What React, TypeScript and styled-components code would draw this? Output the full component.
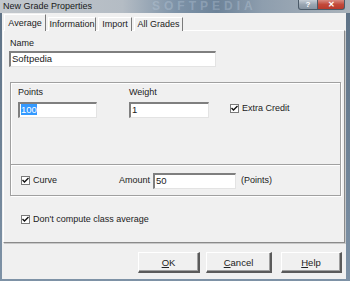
import React from "react";
import styled, { createGlobalStyle } from "styled-components";

const GlobalStyle = createGlobalStyle`
  html, body { margin: 0; padding: 0; background: #56697c; }
  body { font-family: "Liberation Sans", Arial, sans-serif; font-size: 9px; color: #222; }
  * { box-sizing: border-box; }
`;

const Window = styled.div`
  width: 350px;
  height: 281px;
  display: flex;
  flex-direction: column;
  overflow: hidden;
  background: linear-gradient(180deg, #5d7185 0%, #7e92a6 100%);
`;

const TitleBar = styled.div`
  position: relative;
  height: 13px;
  flex: none;
  display: flex;
  align-items: flex-start;
  background: linear-gradient(90deg, #c3c8cd 0%, #b4bcc4 35%, #7e93a8 50%, #6d8399 62%, #8e9eae 75%, #aab3bb 100%);
`;

const TitleText = styled.span`
  margin: 1px 0 0 3px;
  font-size: 9px;
  line-height: 11px;
  color: #1a1a1a;
`;

const Watermark = styled.span`
  position: absolute;
  left: 152px;
  top: 0;
  font-size: 12px;
  line-height: 13px;
  font-weight: bold;
  letter-spacing: 4px;
  color: rgba(200, 215, 230, 0.3);
`;

const CaptionButtons = styled.div`
  margin-left: auto;
  margin-right: 5px;
  display: flex;
  height: 10px;
  position: relative;
`;

const CaptionButton = styled.div<{ close?: boolean }>`
  width: ${p => (p.close ? 27 : 20)}px;
  height: 10px;
  display: flex;
  align-items: center;
  justify-content: center;
  color: #fff;
  font-size: 8px;
  font-weight: bold;
  line-height: 10px;
  border: 1px solid #4b5a68;
  border-top: none;
  border-left: ${p => (p.close ? "none" : "1px solid #4b5a68")};
  border-radius: ${p => (p.close ? "0 0 3px 0" : "0 0 0 3px")};
  background: ${p =>
    p.close
      ? "linear-gradient(180deg, #d88a80 0%, #c2493a 50%, #b83a2c 100%)"
      : "linear-gradient(180deg, #c6ced6 0%, #9aa6b2 50%, #8694a2 100%)"};
`;

const Frame = styled.div`
  flex: 1;
  display: flex;
  padding: 0 4px 2px 2px;
`;

const Body = styled.div`
  flex: 1;
  display: flex;
  flex-direction: column;
  background: #f0f0f0;
  padding-top: 2px;
`;

const TabRow = styled.div`
  display: flex;
  align-items: flex-end;
  height: 16px;
  padding-left: 2px;
  position: relative;
  z-index: 1;
  margin-bottom: -1px;
`;

const Tab = styled.div<{ active?: boolean; w: number }>`
  width: ${p => p.w}px;
  height: ${p => (p.active ? 17 : 14)}px;
  padding-top: ${p => (p.active ? 3 : 1)}px;
  text-align: center;
  line-height: 11px;
  white-space: nowrap;
  background: #f0f0f0;
  border-top: 1px solid #fff;
  border-left: 1px solid #fff;
  border-right: 1px solid #7a7a7a;
  margin-right: 2px;
`;

const Panel = styled.div`
  margin-left: 1px;
  width: 342px;
  height: 213px;
  border-top: 1px solid #fff;
  border-left: 1px solid #fff;
  border-right: 1px solid #8a8a8a;
  border-bottom: 1px solid #8a8a8a;
  box-shadow: 1px 1px 0 #c8c8c8;
  display: flex;
  flex-direction: column;
`;

const Label = styled.div`
  line-height: 11px;
`;

const NameLabel = styled(Label)`
  margin: 7px 0 0 6px;
`;

const TextBox = styled.div<{ w: number }>`
  width: ${p => p.w}px;
  height: 16px;
  background: #fff;
  border-top: 2px solid #7f7f7f;
  border-left: 2px solid #7f7f7f;
  border-right: 1px solid #e3e3e3;
  border-bottom: 1px solid #e3e3e3;
  padding-left: 1px;
  font-size: 9.5px;
  line-height: 12px;
  white-space: nowrap;
`;

const NameBox = styled(TextBox)`
  margin: 2px 0 0 5px;
`;

const Selected = styled.span`
  background: #3399ff;
  color: #fff;
`;

const Group = styled.div`
  margin: 15px 0 0 6px;
  width: 331px;
  height: 114px;
  border: 1px solid #a0a0a0;
  box-shadow: inset 1px 1px 0 #fff, 1px 1px 0 #fff;
  display: flex;
  flex-direction: column;
`;

const TopSection = styled.div`
  height: 81px;
  display: grid;
  grid-template-columns: 111px 101px auto;
  padding: 4px 0 0 7px;
  align-items: start;
`;

const Field = styled.div`
  display: flex;
  flex-direction: column;
  gap: 4px;
`;

const Divider = styled.div`
  height: 2px;
  border-top: 1px solid #a0a0a0;
  border-bottom: 1px solid #fff;
`;

const CurveSection = styled.div`
  flex: 1;
  display: flex;
  align-items: center;
  padding-left: 10px;
`;

const CheckRow = styled.div`
  display: flex;
  align-items: center;
  gap: 3px;
  line-height: 11px;
`;

const Box = styled.span`
  width: 9px;
  height: 9px;
  background: #fff;
  border: 1px solid #7a7a7a;
  display: inline-flex;
  align-items: center;
  justify-content: center;
`;

const ExtraCheck = styled(CheckRow)`
  margin-top: 16px;
`;

const CurveCheck = styled(CheckRow)`
  width: 98px;
`;

const AmountLabel = styled(Label)`
  width: 34px;
  padding-right: 3px;
  text-align: right;
  white-space: nowrap;
`;

const UnitLabel = styled(Label)`
  margin-left: 5px;
`;

const AverageRow = styled(CheckRow)`
  margin: 18px 0 0 17px;
`;

const ButtonRow = styled.div`
  display: flex;
  justify-content: flex-end;
  padding-right: 4px;
  margin-top: 9px;
`;

const Button = styled.div<{ w: number; gap: number }>`
  width: ${p => p.w}px;
  height: 21px;
  margin-left: ${p => p.gap}px;
  display: flex;
  align-items: center;
  justify-content: center;
  background: #f0f0f0;
  border-top: 1px solid #fff;
  border-left: 1px solid #fff;
  border-right: 2px solid #5a5a5a;
  border-bottom: 2px solid #5a5a5a;
  box-shadow: inset -1px -1px 0 #a0a0a0;
  font-size: 9.5px;
`;

const Key = styled.span`
  text-decoration: underline;
`;

const Check = () => (
  <Box>
    <svg width="7" height="7" viewBox="0 0 7 7">
      <polyline points="0.5,3 2.5,5 6.5,1" fill="none" stroke="#111" strokeWidth="1.4" />
    </svg>
  </Box>
);

export default function App() {
  return (
    <>
      <GlobalStyle />
      <Window>
        <TitleBar>
          <TitleText>New Grade Properties</TitleText>
          <Watermark>SOFTPEDIA</Watermark>
          <CaptionButtons>
            <CaptionButton>?</CaptionButton>
            <CaptionButton close>✕</CaptionButton>
          </CaptionButtons>
        </TitleBar>
        <Frame>
          <Body>
            <TabRow>
              <Tab active w={42}>Average</Tab>
              <Tab w={48}>Information</Tab>
              <Tab w={34}>Import</Tab>
              <Tab w={49}>All Grades</Tab>
            </TabRow>
            <Panel>
              <NameLabel>Name</NameLabel>
              <NameBox w={207}>Softpedia</NameBox>
              <Group>
                <TopSection>
                  <Field>
                    <Label>Points</Label>
                    <TextBox w={79}>
                      <Selected>100</Selected>
                    </TextBox>
                  </Field>
                  <Field>
                    <Label>Weight</Label>
                    <TextBox w={80}>1</TextBox>
                  </Field>
                  <ExtraCheck>
                    <Check />
                    <span>Extra Credit</span>
                  </ExtraCheck>
                </TopSection>
                <Divider />
                <CurveSection>
                  <CurveCheck>
                    <Check />
                    <span>Curve</span>
                  </CurveCheck>
                  <AmountLabel>Amount</AmountLabel>
                  <TextBox w={83}>50</TextBox>
                  <UnitLabel>(Points)</UnitLabel>
                </CurveSection>
              </Group>
              <AverageRow>
                <Check />
                <span>Don't compute class average</span>
              </AverageRow>
            </Panel>
            <ButtonRow>
              <Button w={62} gap={0}>
                <Key>O</Key>K
              </Button>
              <Button w={66} gap={6}>
                <Key>C</Key>ancel
              </Button>
              <Button w={61} gap={9}>
                <Key>H</Key>elp
              </Button>
            </ButtonRow>
          </Body>
        </Frame>
      </Window>
    </>
  );
}
